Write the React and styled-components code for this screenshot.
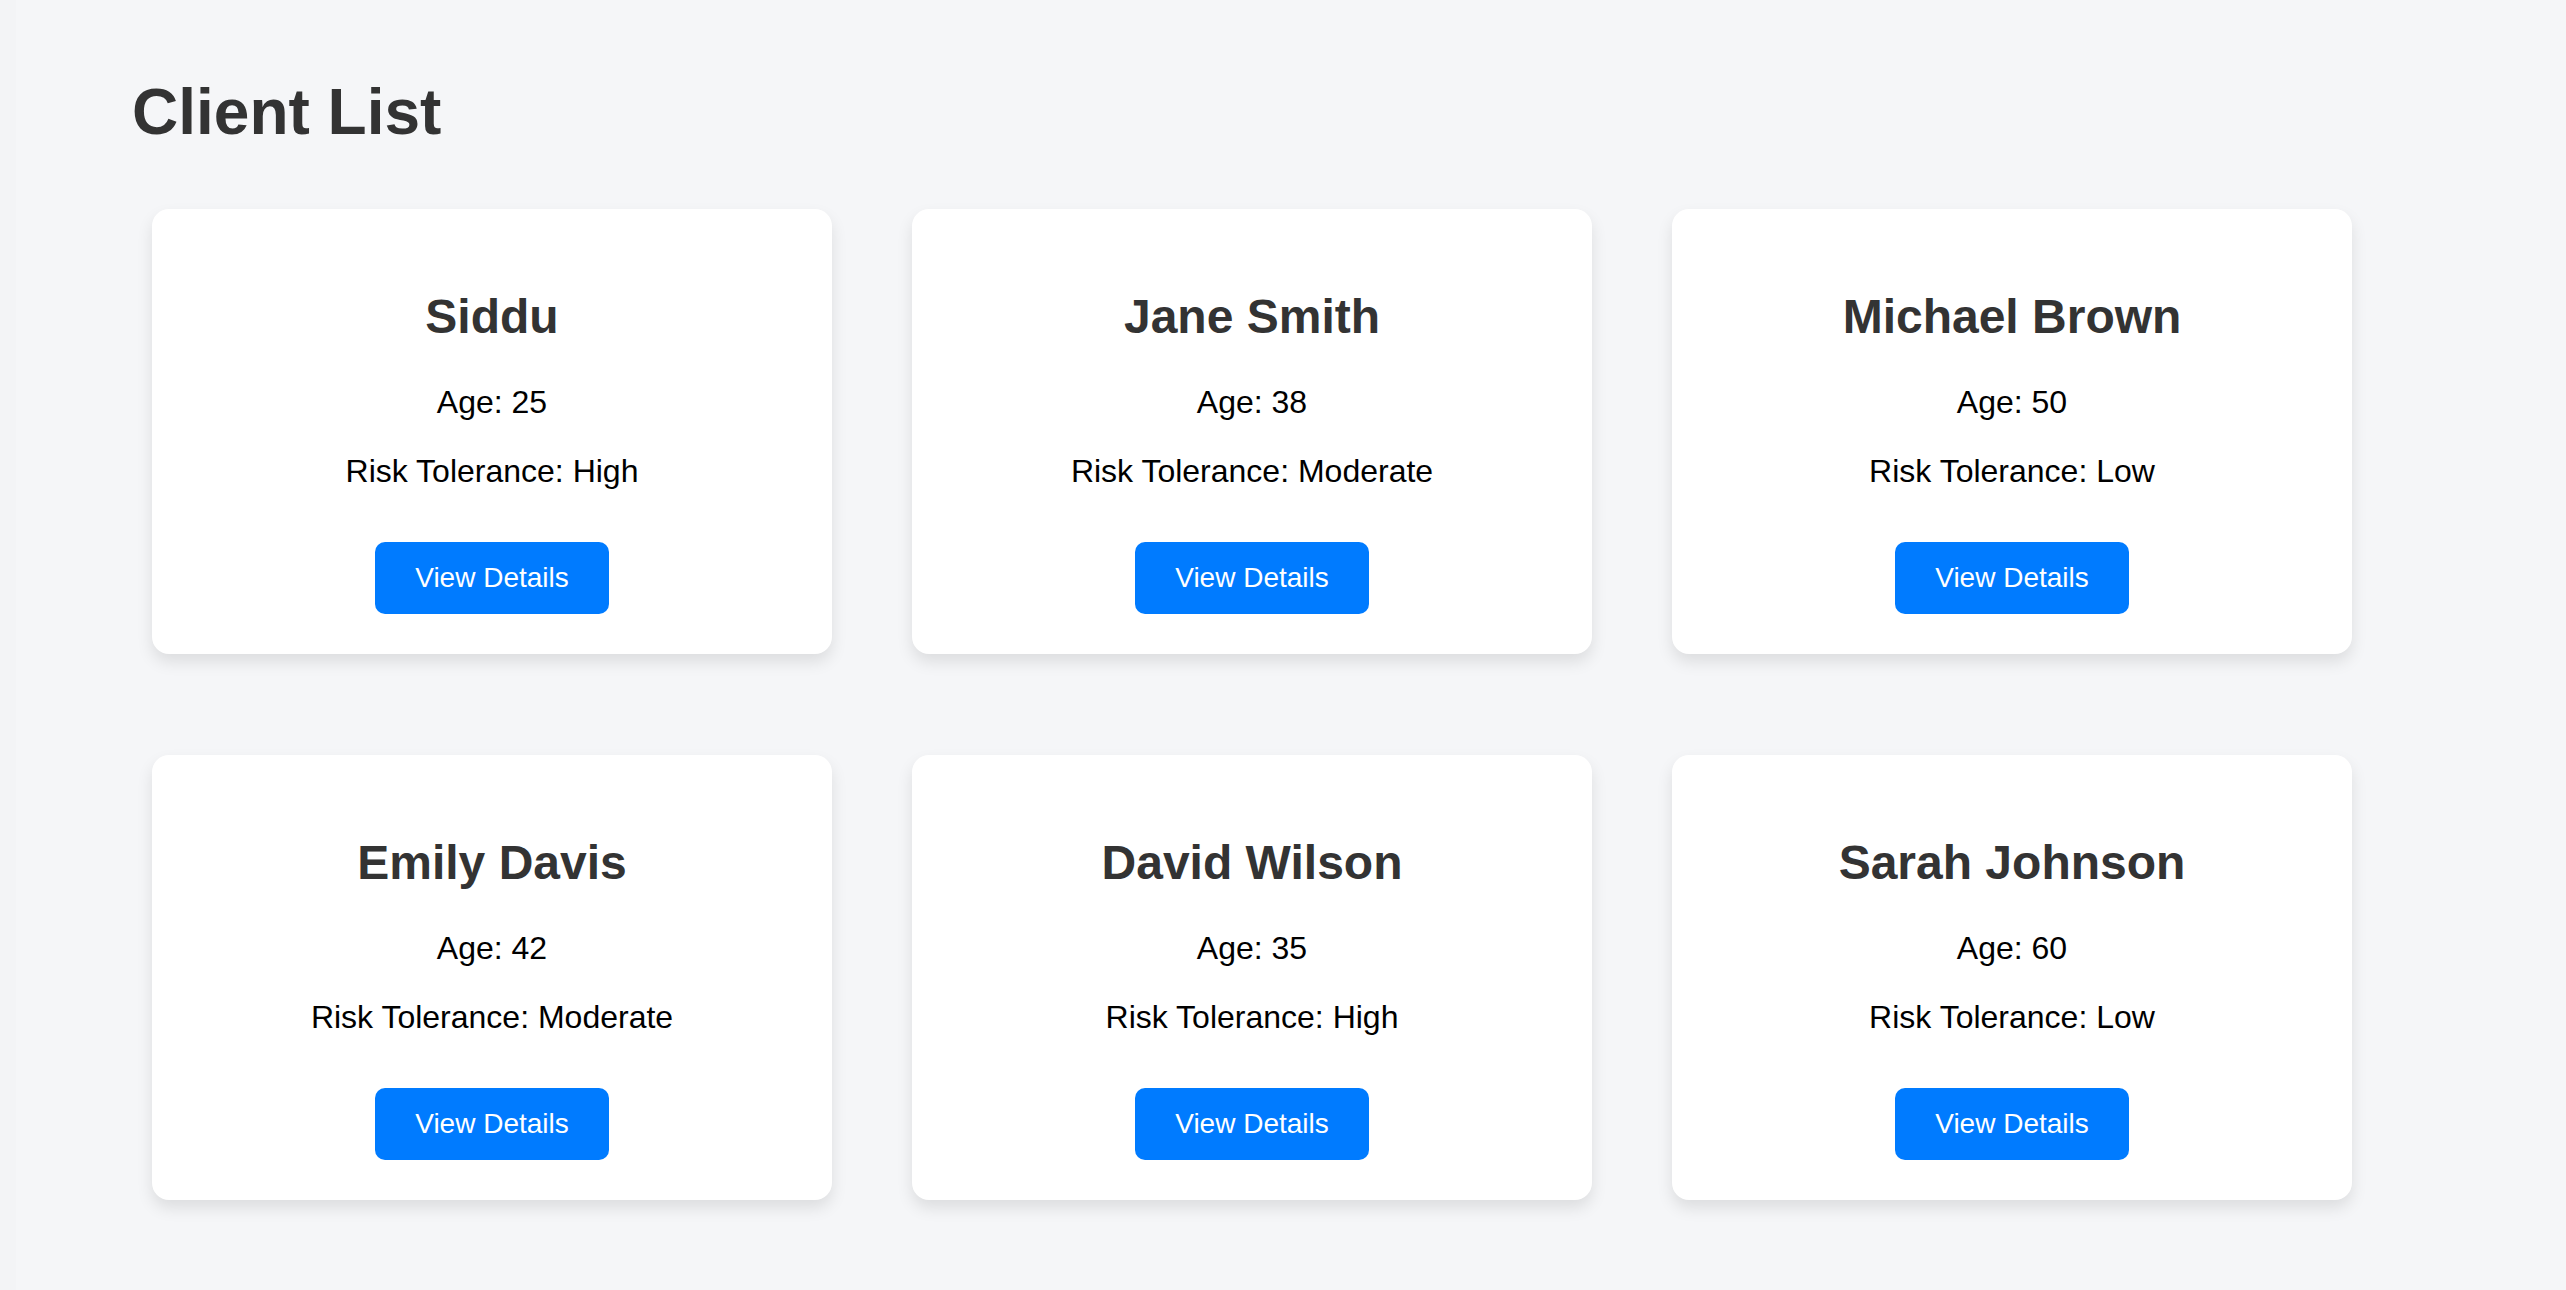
import React from 'react';
import styled, { createGlobalStyle } from 'styled-components';

const GlobalStyle = createGlobalStyle`
  html, body {
    margin: 0;
    padding: 0;
    background: #f3f4f6;
  }
  body {
    padding-left: 16px;
    font-family: "Liberation Sans", Arial, sans-serif;
  }
`

const Page = styled.div`
  min-height: 100vh;
  box-sizing: border-box;
  background: #f5f6f8;
  padding: 75px 0 40px 116px;
`

const Title = styled.h1`
  margin: 0;
  font-size: 64px;
  font-weight: bold;
  color: #333;
`

const Grid = styled.div`
  display: grid;
  grid-template-columns: repeat(3, 680px);
  column-gap: 80px;
  row-gap: 101px;
  margin: 60px 0 0 20px;
`

const Card = styled.div`
  box-sizing: border-box;
  background: #fff;
  border-radius: 17px;
  padding: 40px;
  text-align: center;
  box-shadow: 0 8px 16px rgba(0, 0, 0, 0.1);
`

const Name = styled.h2`
  margin: 40px 0;
  font-size: 48px;
  font-weight: bold;
  color: #333;
`

const Info = styled.p`
  margin: 32px 0;
  font-size: 32px;
  color: #000;
`

const Button = styled.button`
  margin-top: 20px;
  padding: 20px 40px;
  border: none;
  border-radius: 10px;
  background: #007bff;
  color: #fff;
  font-family: "Liberation Sans", Arial, sans-serif;
  font-size: 28px;
  cursor: pointer;
`

const clients = [
  { name: 'Siddu', age: 25, risk: 'High' },
  { name: 'Jane Smith', age: 38, risk: 'Moderate' },
  { name: 'Michael Brown', age: 50, risk: 'Low' },
  { name: 'Emily Davis', age: 42, risk: 'Moderate' },
  { name: 'David Wilson', age: 35, risk: 'High' },
  { name: 'Sarah Johnson', age: 60, risk: 'Low' },
];

const App = () => {
  return (
    <>
      <GlobalStyle />
      <Page>
        <Title>Client List</Title>
        <Grid>
          {clients.map((client) => (
            <Card key={client.name}>
              <Name>{client.name}</Name>
              <Info>Age: {client.age}</Info>
              <Info>Risk Tolerance: {client.risk}</Info>
              <Button>View Details</Button>
            </Card>
          ))}
        </Grid>
      </Page>
    </>
  );
};

export default App;
